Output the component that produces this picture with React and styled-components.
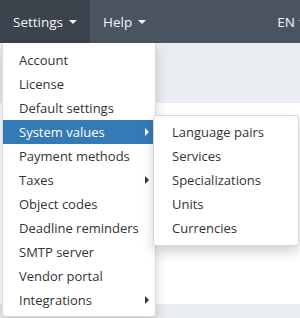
import React from 'react'
import styled, { createGlobalStyle } from 'styled-components'

const Global = createGlobalStyle`
  html, body {
    margin: 0;
    padding: 0;
    background: #ffffff;
    font-family: 'Open Sans', 'Liberation Sans', sans-serif;
    font-size: 13px;
    color: #333;
  }
`

const Page = styled.div`
  position: relative;
  width: 300px;
  height: 318px;
  overflow: hidden;
  background: #e9edf1;
`

const Navbar = styled.nav`
  display: flex;
  align-items: stretch;
  height: 43px;
  background: #4a5561;
`

const NavItem = styled.div`
  display: flex;
  align-items: center;
  gap: ${(p) => (p.$right ? '4px' : '6px')};
  padding: 0 13px;
  color: #f4f6f8;
  font-size: 13.5px;
  background: ${(p) => (p.$active ? '#3b434d' : 'transparent')};
  margin-left: ${(p) => (p.$right ? 'auto' : '0')};
  margin-right: ${(p) => (p.$right ? '-20px' : '0')};
`

const CaretDown = styled.span`
  width: 0;
  height: 0;
  border-left: 4px solid transparent;
  border-right: 4px solid transparent;
  border-top: 4px solid #f4f6f8;
  margin-top: 1px;
`

const Header = styled.div`
  height: 60px;
`

const Content = styled.div`
  height: 201px;
  background: #ffffff;
`

const Menu = styled.ul`
  position: absolute;
  top: 43px;
  left: 2px;
  width: 152px;
  margin: 0;
  padding: 5px 0 4px;
  list-style: none;
  background: #fff;
  border: 1px solid rgba(0, 0, 0, 0.15);
  border-top: none;
  border-radius: 0 0 4px 4px;
  box-shadow: 0 6px 12px rgba(0, 0, 0, 0.175);
`

const SubMenu = styled(Menu)`
  top: 115px;
  left: 153px;
  width: 144px;
  padding: 4px 0 5px;
  border-top: 1px solid rgba(0, 0, 0, 0.15);
  border-radius: 4px;
`

const Item = styled.li`
  position: relative;
  height: 24px;
  line-height: 24px;
  padding-left: ${(p) => (p.$sub ? '18px' : '16px')};
  white-space: nowrap;
  color: ${(p) => (p.$active ? '#fff' : '#333')};
  background: ${(p) => (p.$active ? '#337ab7' : 'transparent')};
`

const CaretRight = styled.span`
  position: absolute;
  right: 6px;
  top: 50%;
  margin-top: -4px;
  width: 0;
  height: 0;
  border-top: 4px solid transparent;
  border-bottom: 4px solid transparent;
  border-left: 4px solid ${(p) => (p.$light ? '#fff' : '#333')};
`

const settings = [
  { label: 'Account' },
  { label: 'License' },
  { label: 'Default settings' },
  { label: 'System values', more: true, active: true },
  { label: 'Payment methods' },
  { label: 'Taxes', more: true },
  { label: 'Object codes' },
  { label: 'Deadline reminders' },
  { label: 'SMTP server' },
  { label: 'Vendor portal' },
  { label: 'Integrations', more: true },
]

const systemValues = ['Language pairs', 'Services', 'Specializations', 'Units', 'Currencies']

export default function App() {
  return (
    <Page>
      <Global />
      <Navbar>
        <NavItem $active>
          Settings <CaretDown />
        </NavItem>
        <NavItem>
          Help <CaretDown />
        </NavItem>
        <NavItem $right>
          EN <CaretDown />
        </NavItem>
      </Navbar>
      <Header />
      <Content />
      <Menu>
        {settings.map((s) => (
          <Item key={s.label} $active={s.active}>
            {s.label}
            {s.more && <CaretRight $light={s.active} />}
          </Item>
        ))}
      </Menu>
      <SubMenu>
        {systemValues.map((v) => (
          <Item key={v} $sub>
            {v}
          </Item>
        ))}
      </SubMenu>
    </Page>
  )
}
